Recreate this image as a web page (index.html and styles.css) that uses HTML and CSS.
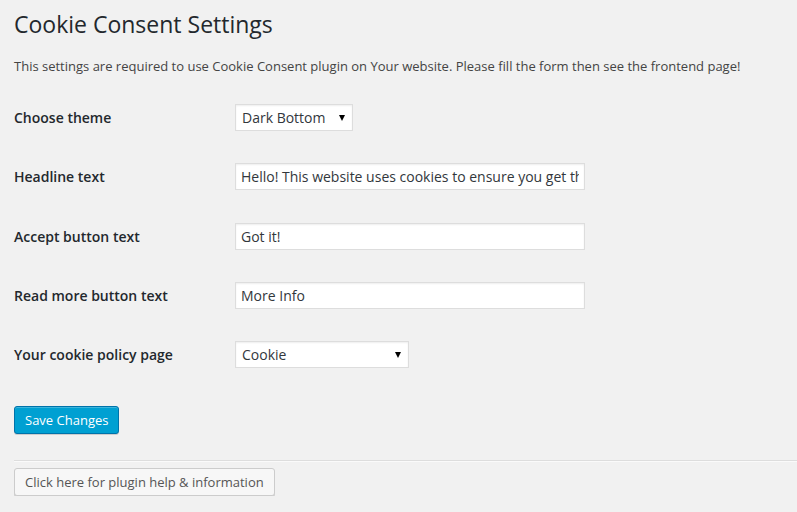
FILE: index.html
```html
<!DOCTYPE html>
<html>
<head>
<meta charset="utf-8">
<link rel="stylesheet" href="styles.css">
</head>
<body>
<div class="wrap">
  <h1 class="title">Cookie Consent Settings</h1>
  <p class="intro">This settings are required to use Cookie Consent plugin on Your website. Please fill the form then see the frontend page!</p>
  <form class="form">
    <div class="row">
      <label class="label">Choose theme</label>
      <div class="field"><span class="select select-theme"><span class="select-text">Dark Bottom</span><span class="arrow"></span></span></div>
    </div>
    <div class="row">
      <label class="label">Headline text</label>
      <div class="field"><input class="text" type="text" value="Hello! This website uses cookies to ensure you get the best experience on our website"></div>
    </div>
    <div class="row">
      <label class="label">Accept button text</label>
      <div class="field"><input class="text" type="text" value="Got it!"></div>
    </div>
    <div class="row">
      <label class="label">Read more button text</label>
      <div class="field"><input class="text" type="text" value="More Info"></div>
    </div>
    <div class="row">
      <label class="label">Your cookie policy page</label>
      <div class="field"><span class="select select-page"><span class="select-text">Cookie</span><span class="arrow"></span></span></div>
    </div>
    <div class="submit">
      <button type="button" class="btn-primary">Save Changes</button>
    </div>
  </form>
  <hr class="sep">
  <button type="button" class="btn-secondary">Click here for plugin help &amp; information</button>
</div>
</body>
</html>
```
FILE: styles.css
```css
html, body {
  margin: 0;
  padding: 0;
  background: #f1f1f1;
}
body {
  font-family: "Open Sans", "Liberation Sans", sans-serif;
  color: #444;
  font-size: 13px;
}
.wrap {
  padding: 10px 0 0 14px;
}
.title {
  margin: 0;
  font-size: 23px;
  font-weight: 400;
  line-height: 29px;
  color: #23282d;
  padding: 0;
}
.intro {
  margin: 17px 0 0;
  font-size: 13px;
  line-height: 20px;
  color: #444;
}
.form {
  margin-top: 12px;
}
.row {
  display: flex;
  align-items: center;
  height: 59.25px;
}
.label {
  width: 221px;
  font-size: 14px;
  font-weight: 600;
  color: #23282d;
}
.field {
  display: flex;
  align-items: center;
}
.text {
  box-sizing: border-box;
  width: 350px;
  height: 27px;
  margin: 0;
  padding: 0 5px;
  border: 1px solid #ddd;
  background: #fff;
  box-shadow: inset 0 1px 2px rgba(0,0,0,.07);
  font-family: "Open Sans", "Liberation Sans", sans-serif;
  font-size: 14px;
  color: #32373c;
  outline: none;
}
.select {
  position: relative;
  box-sizing: border-box;
  display: flex;
  align-items: center;
  height: 27px;
  padding: 0 6px;
  border: 1px solid #ddd;
  background: #fff;
  box-shadow: inset 0 1px 2px rgba(0,0,0,.07);
  font-size: 14px;
  color: #32373c;
}
.select-theme { width: 118px; }
.select-page { width: 174px; }
.arrow {
  position: absolute;
  right: 7px;
  top: 10px;
  width: 0;
  height: 0;
  border-left: 3px solid transparent;
  border-right: 3px solid transparent;
  border-top: 6px solid #000;
}
.submit {
  padding: 22px 0 0;
}
.btn-primary {
  box-sizing: border-box;
  height: 28px;
  padding: 0 10px;
  border: 1px solid #0073aa;
  border-radius: 3px;
  background: #00a0d2;
  color: #fff;
  font-family: "Open Sans", "Liberation Sans", sans-serif;
  font-size: 13px;
  line-height: 26px;
  box-shadow: inset 0 1px 0 rgba(120,200,230,.5), 0 1px 0 rgba(0,0,0,.15);
  cursor: pointer;
}
.sep {
  margin: 26px 0 6px;
  border: 0;
  border-top: 1px solid #ddd;
  border-bottom: 1px solid #fafafa;
  height: 0;
}
.btn-secondary {
  box-sizing: border-box;
  height: 28px;
  padding: 0 10px;
  border: 1px solid #ccc;
  border-radius: 3px;
  background: #f7f7f7;
  color: #555;
  font-family: "Open Sans", "Liberation Sans", sans-serif;
  font-size: 13px;
  line-height: 26px;
  box-shadow: 0 1px 0 #ccc;
  cursor: pointer;
}
```
